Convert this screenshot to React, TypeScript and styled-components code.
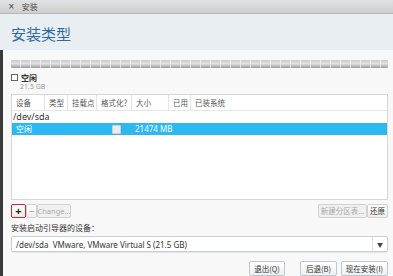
import React from "react";
import styled, { createGlobalStyle } from "styled-components";

const Global = createGlobalStyle`
  html, body { margin: 0; padding: 0; }
  body { width: 393px; height: 276px; overflow: hidden; background: #f7f7f7;
    font-family: "Noto Sans", "Noto Sans CJK SC", sans-serif; }
`;

const Window = styled.div`
  width: 393px; height: 276px; display: flex; flex-direction: column; overflow: hidden;
`;

const TitleBar = styled.div`
  height: 14px; box-sizing: border-box; display: flex; align-items: center; gap: 7px;
  padding-left: 8px; background: linear-gradient(#e2e2e2, #cfcfcf);
  border-bottom: 1px solid #b8b8b8; color: #4a4a4a; font-size: 8px; line-height: 1;
  font-family: "Noto Sans CJK SC", sans-serif;
`;

const Close = styled.span`font-size: 8px; color: #333; font-family: "DejaVu Sans", sans-serif;`;

const Header = styled.div`
  height: 36px; box-sizing: border-box; background: #e9eef2; padding: 2px 0 0 11px;
  display: flex; align-items: center;
  font-family: "Noto Sans CJK SC", sans-serif; font-size: 15px; color: #2e6aa6;
`;

const Body = styled.div`
  flex: 1; display: flex; flex-direction: column; background: #f8f8f8;
  border-left: 3px solid #3a3a3a; padding: 10px 5px 0 8px;
`;

const PartBar = styled.div`
  height: 8px; border-radius: 1px; flex-shrink: 0;
  background:
    repeating-linear-gradient(90deg, transparent 0 9px, rgba(255,255,255,0.55) 9px 10px),
    linear-gradient(#c9c9c9, #e2e2e2 45%, #9c9c9c);
`;

const Legend = styled.div`
  display: flex; flex-direction: column; margin-top: 4px;
`;

const LegendTitle = styled.div`
  display: flex; align-items: center; gap: 3px; font-size: 8px; font-weight: bold; color: #333;
  font-family: "Noto Sans CJK SC", sans-serif; height: 11px; line-height: 11px;
`;

const SmallBox = styled.span`
  width: 5px; height: 5px; border: 1px solid #666; background: #fff; display: inline-block;
`;

const LegendSize = styled.div`
  font-size: 7px; color: #999; padding-left: 9px; line-height: 8px;
`;

const Table = styled.div`
  margin-top: 3px; height: 104px; background: #fff; border: 1px solid #d6d6d6;
  display: flex; flex-direction: column; flex-shrink: 0;
`;

const cols = "33px 23px 29px 35px 37px 22px 1fr";

const HeadRow = styled.div`
  display: grid; grid-template-columns: ${cols}; height: 15px; border-bottom: 1px solid #e6e6e6;
  font-family: "Noto Sans CJK SC", sans-serif; font-size: 7.5px; color: #555;
`;

const HeadCell = styled.div<{ $last?: boolean }>`
  display: flex; align-items: center; padding-left: 4px; white-space: nowrap;
  border-right: ${(p) => (p.$last ? "none" : "1px solid #e4e4e4")};
`;

const Row = styled.div<{ $sel?: boolean }>`
  display: grid; grid-template-columns: ${cols}; height: 12px; line-height: 12px;
  background: ${(p) => (p.$sel ? "#2db8f2" : "transparent")};
  color: ${(p) => (p.$sel ? "#fff" : "#333")}; font-size: 8px; white-space: nowrap;
`;

const DevCell = styled.div`grid-column: 1 / span 3; padding-left: 1px; font-size: 9px;`;

const Cell = styled.div<{ $pad?: number }>`
  padding-left: ${(p) => p.$pad ?? 4}px; display: flex; align-items: center; overflow: visible;
  font-family: "Noto Sans", "Noto Sans CJK SC", sans-serif;
`;

const Check = styled.span`
  width: 7px; height: 7px; border-radius: 1px; background: #ececec; border: 1px solid #cfcfcf;
  display: inline-block; margin-left: 11px;
`;

const Toolbar = styled.div`
  display: flex; align-items: center; margin-top: 3px; height: 15px;
`;

const ToolBtn = styled.div<{ $w: number; $red?: boolean; $dis?: boolean }>`
  width: ${(p) => p.$w}px; height: 14px; box-sizing: border-box; display: flex;
  align-items: center; justify-content: center; font-size: 7.5px; white-space: nowrap;
  color: ${(p) => (p.$dis ? "#aaa" : "#333")};
  background: ${(p) => (p.$dis ? "#f0f0f0" : "linear-gradient(#ffffff, #eeeeee)")};
  border: 1px solid ${(p) => (p.$red ? "#e0202a" : "#d2d2d2")};
  border-radius: 2px; font-family: "Noto Sans", "Noto Sans CJK SC", sans-serif;
`;

const Plus = styled.span`font-size: 11px; font-weight: bold; color: #222; line-height: 1;`;
const Minus = styled.span`font-size: 10px; color: #999; line-height: 1;`;

const Spacer = styled.div`flex: 1;`;

const Label = styled.div`
  margin-top: 4px; font-size: 8px; line-height: 11px; color: #333;
  font-family: "Noto Sans CJK SC", sans-serif;
`;

const Combo = styled.div`
  margin-top: 3px; height: 16px; box-sizing: border-box; border: 1px solid #c8d0d8;
  border-radius: 2px; background: #fff; display: flex; align-items: center;
  padding-left: 4px; font-size: 8px; color: #333; box-shadow: 0 1px 1px rgba(0,0,0,0.08);
`;

const ComboText = styled.span`flex: 1; white-space: pre;`;

const Arrow = styled.div`
  width: 14px; height: 100%; border-left: 1px solid #e2e2e2; display: flex;
  align-items: center; justify-content: center; font-size: 6px; color: #444;
`;

const Footer = styled.div`
  display: flex; justify-content: flex-end; gap: 4px; margin-top: 9px;
`;

const FootBtn = styled.div<{ $w: number; $gapAfter?: number }>`
  width: ${(p) => p.$w}px; height: 15px; box-sizing: border-box; display: flex;
  margin-right: ${(p) => p.$gapAfter ?? 0}px;
  align-items: center; justify-content: center; font-size: 7.5px; color: #333;
  border: 1px solid #b9c6d3; border-radius: 2px; background: linear-gradient(#ffffff, #efefef);
  font-family: "Noto Sans CJK SC", sans-serif; white-space: nowrap;
`;

const headers = ["设备", "类型", "挂载点", "格式化？", "大小", "已用", "已装系统"];

export default function App() {
  return (
    <Window>
      <Global />
      <TitleBar>
        <Close>×</Close>
        <span>安装</span>
      </TitleBar>
      <Header>安装类型</Header>
      <Body>
        <PartBar />
        <Legend>
          <LegendTitle>
            <SmallBox />
            空闲
          </LegendTitle>
          <LegendSize>21.5 GB</LegendSize>
        </Legend>
        <Table>
          <HeadRow>
            {headers.map((h, i) => (
              <HeadCell key={h} $last={i === headers.length - 1}>
                {h}
              </HeadCell>
            ))}
          </HeadRow>
          <Row>
            <DevCell>/dev/sda</DevCell>
          </Row>
          <Row $sel>
            <Cell $pad={4}>空闲</Cell>
            <Cell />
            <Cell />
            <Cell>
              <Check />
            </Cell>
            <Cell $pad={3}>21474 MB</Cell>
            <Cell />
            <Cell />
          </Row>
        </Table>
        <Toolbar>
          <ToolBtn $w={15} $red>
            <Plus>+</Plus>
          </ToolBtn>
          <ToolBtn $w={11}>
            <Minus>−</Minus>
          </ToolBtn>
          <ToolBtn $w={34} $dis>
            Change...
          </ToolBtn>
          <Spacer />
          <ToolBtn $w={49} $dis>
            新建分区表...
          </ToolBtn>
          <ToolBtn $w={21}>还原</ToolBtn>
        </Toolbar>
        <Label>安装启动引导器的设备：</Label>
        <Combo>
          <ComboText>/dev/sda  VMware, VMware Virtual S (21.5 GB)</ComboText>
          <Arrow>▼</Arrow>
        </Combo>
        <Footer>
          <FootBtn $w={36} $gapAfter={11}>退出(Q)</FootBtn>
          <FootBtn $w={37}>后退(B)</FootBtn>
          <FootBtn $w={47}>现在安装(I)</FootBtn>
        </Footer>
      </Body>
    </Window>
  );
}
